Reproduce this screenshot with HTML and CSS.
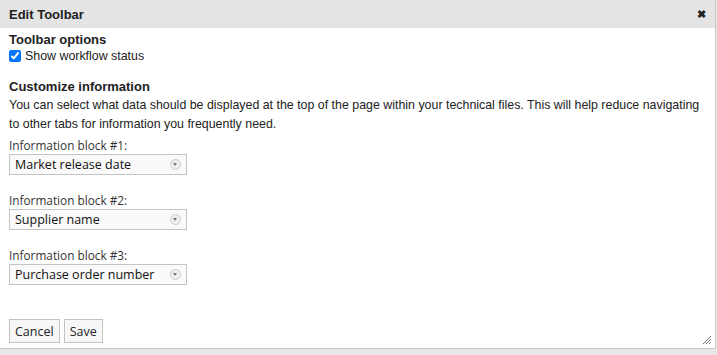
FILE: index.html
```html
<!DOCTYPE html>
<html>
<head>
<meta charset="utf-8">
<link rel="stylesheet" href="styles.css">
</head>
<body>
<div class="dialog">
  <div class="titlebar">
    <span class="title">Edit Toolbar</span>
    <span class="close">&#x2716;</span>
  </div>
  <div class="content">
    <div class="heading">Toolbar options</div>
    <label class="check"><input type="checkbox" checked> Show workflow status</label>
    <div class="heading second">Customize information</div>
    <p class="desc">You can select what data should be displayed at the top of the page within your technical files. This will help reduce navigating to other tabs for information you frequently need.</p>
    <div class="block">
      <div class="label">Information block #1:</div>
      <div class="select"><span>Market release date</span><span class="arrow"></span></div>
    </div>
    <div class="block">
      <div class="label">Information block #2:</div>
      <div class="select"><span>Supplier name</span><span class="arrow"></span></div>
    </div>
    <div class="block">
      <div class="label">Information block #3:</div>
      <div class="select"><span>Purchase order number</span><span class="arrow"></span></div>
    </div>
    <div class="buttons">
      <button class="btn">Cancel</button>
      <button class="btn">Save</button>
    </div>
    <div class="grip">
      <svg width="10" height="10" viewBox="0 0 10 10"><path d="M9 1L1 9M9 4L4 9M9 7L7 9" stroke="#777" stroke-width="1"/></svg>
    </div>
  </div>
</div>
</body>
</html>
```
FILE: styles.css
```css
html, body { margin: 0; padding: 0; background: #e8e8e8; }
body { width: 717px; height: 355px; overflow: hidden; font-family: "Liberation Sans", Arial, sans-serif; color: #222; }
.dialog { width: 716px; height: 349px; background: #fff; border-right: 1px solid #c8c8c8; border-bottom: 1px solid #c8c8c8; box-sizing: border-box; display: flex; flex-direction: column; }
.titlebar { flex: 0 0 28px; height: 28px; background: #e4e4e4; display: flex; align-items: center; justify-content: space-between; padding: 0 9px; font-size: 13px; font-weight: bold; }
.close { font-size: 11px; color: #222; }
.content { position: relative; flex: 1; padding: 4px 9px 0; font-size: 12.4px; }
.heading { font-weight: bold; line-height: 16px; font-size: 13px; }
.heading.second { margin-top: 15px; }
.check { display: flex; align-items: center; line-height: 16px; }
.check input { margin: 0 4px 0 0; width: 12px; height: 12px; }
.desc { margin: 1px 0 0; line-height: 19px; }
.block { margin-top: 5px; }
.block + .block { margin-top: 19px; }
.label { font-family: "Open Sans", sans-serif; font-size: 11.8px; line-height: 13px; margin-bottom: 2px; color: #333; }
.select { margin-top: 0; width: 178px; height: 21px; box-sizing: border-box; border: 1px solid #c4c4c4; background: #fafafa; display: flex; align-items: center; justify-content: space-between; padding: 0 5px; font-family: "Open Sans", sans-serif; font-size: 12.5px; color: #111; }
.arrow { width: 9px; height: 9px; border: 1px solid #ccc; border-radius: 50%; background: #f0f0f0; position: relative; }
.arrow::after { content: ""; position: absolute; left: 2px; top: 3px; border-left: 2.5px solid transparent; border-right: 2.5px solid transparent; border-top: 3px solid #777; }
.buttons { margin-top: 34px; display: flex; gap: 4px; }
.btn { height: 24px; padding: 0 5px; border: 1px solid #c4c4c4; background: #f7f7f7; font-family: "Open Sans", sans-serif; font-size: 12.5px; color: #222; border-radius: 0; }
.grip { position: absolute; right: 3px; bottom: 3px; width: 10px; height: 10px; line-height: 0; }
```
